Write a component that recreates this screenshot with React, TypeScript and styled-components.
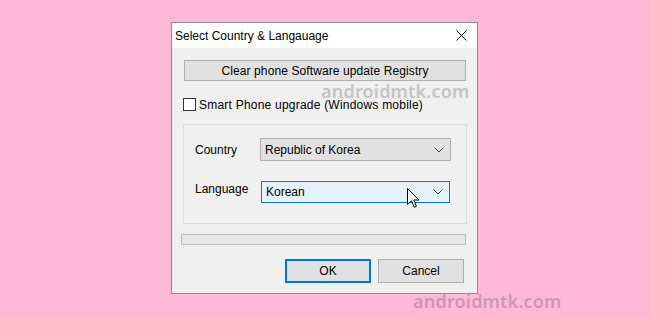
import styled, { createGlobalStyle } from 'styled-components'

const GlobalStyle = createGlobalStyle`
    html, body {
        margin: 0;
        padding: 0;
        background: #ffb9d6;
    }
    body {
        font-family: "Liberation Sans", Arial, sans-serif;
        font-size: 12px;
        color: #000;
    }
`

const Page = styled.div`
    position: relative;
    width: 650px;
    height: 318px;
    padding: 22px 0 0 171px;
    box-sizing: border-box;
    overflow: hidden;
`

const Window = styled.div`
    width: 307px;
    height: 272px;
    box-sizing: border-box;
    border: 1px solid #8c8c8c;
    background: #f0f0f0;
    display: flex;
    flex-direction: column;
`

const TitleBar = styled.div`
    height: 25px;
    background: #fff;
    display: flex;
    align-items: center;
    justify-content: space-between;
    padding: 0 10px 0 3px;
    font-size: 12px;
`

const Body = styled.div`
    display: flex;
    flex-direction: column;
    align-items: flex-start;
`

const WideButton = styled.div`
    margin: 12px 0 0 12px;
    width: 282px;
    height: 21px;
    box-sizing: border-box;
    border: 1px solid #adadad;
    background: #e1e1e1;
    display: flex;
    align-items: center;
    justify-content: center;
    letter-spacing: 0.1px;
`

const CheckRow = styled.label`
    margin: 17px 0 0 11px;
    display: flex;
    align-items: center;
    gap: 3px;
    height: 13px;
    letter-spacing: 0.22px;
`

const CheckBox = styled.span`
    width: 13px;
    height: 13px;
    box-sizing: border-box;
    border: 1px solid #333;
    background: #fff;
`

const Group = styled.div`
    margin: 13px 0 0 11px;
    width: 284px;
    height: 100px;
    box-sizing: border-box;
    border: 1px solid #dcdcdc;
    padding: 13px 0 0 11px;
    display: flex;
    flex-direction: column;
    gap: 20px;
`

const FieldRow = styled.div<{ $raise?: number }>`
    display: flex;
    align-items: center;
    label {
        width: 65px;
        margin-top: ${p => -(p.$raise ?? 0)}px;
    }
`

const Combo = styled.div<{ $focused?: boolean }>`
    width: ${p => (p.$focused ? 189 : 191)}px;
    height: ${p => (p.$focused ? 22 : 23)}px;
    margin-left: ${p => (p.$focused ? 1 : 0)}px;
    box-sizing: border-box;
    border: 1px solid ${p => (p.$focused ? '#0078d7' : '#adadad')};
    background: ${p => (p.$focused ? '#e5f1fb' : '#e1e1e1')};
    display: flex;
    align-items: center;
    justify-content: space-between;
    padding: 0 6px 0 4px;
    font-size: 12px;
`

const Progress = styled.div`
    margin: 10px 0 0 9px;
    width: 285px;
    height: 11px;
    box-sizing: border-box;
    border: 1px solid #bcbcbc;
    background: #e6e6e6;
`

const Buttons = styled.div`
    margin: 14px 0 0 113px;
    display: flex;
    gap: 7px;
`

const DialogButton = styled.div<{ $default?: boolean }>`
    width: 86px;
    height: 24px;
    box-sizing: border-box;
    border: ${p => (p.$default ? '2px solid #0078d7' : '1px solid #adadad')};
    background: #e1e1e1;
    display: flex;
    align-items: center;
    justify-content: center;
`

const Watermark = styled.div<{ $x: number; $y: number; $dark?: boolean }>`
    position: absolute;
    left: ${p => p.$x}px;
    top: ${p => p.$y}px;
    font-family: "Noto Sans", sans-serif;
    font-weight: 600;
    font-size: 18px;
    line-height: 12px;
    letter-spacing: 0.2px;
    color: ${p => (p.$dark ? '#c898b0' : '#c4c4c4')};
    pointer-events: none;
`

const Cursor = styled.svg`
    position: absolute;
    left: 407px;
    top: 188px;
`

const Chevron = () => (
    <svg width="10" height="6" viewBox="0 0 10 6">
        <path d="M0.5 0.5 L5 5 L9.5 0.5" fill="none" stroke="#444" strokeWidth="1" />
    </svg>
)

const CloseIcon = () => (
    <svg width="11" height="11" viewBox="0 0 11 11">
        <path d="M0.5 0.5 L10.5 10.5 M10.5 0.5 L0.5 10.5" stroke="#000" strokeWidth="1" />
    </svg>
)

export default function App() {
    return (
        <>
            <GlobalStyle />
            <Page>
                <Window>
                    <TitleBar>
                        <span>Select Country &amp; Langauage</span>
                        <CloseIcon />
                    </TitleBar>
                    <Body>
                        <WideButton>Clear phone Software update Registry</WideButton>
                        <CheckRow>
                            <CheckBox />
                            <span>Smart Phone upgrade (Windows mobile)</span>
                        </CheckRow>
                        <Group>
                            <FieldRow>
                                <label>Country</label>
                                <Combo>
                                    <span>Republic of Korea</span>
                                    <Chevron />
                                </Combo>
                            </FieldRow>
                            <FieldRow $raise={6}>
                                <label>Language</label>
                                <Combo $focused>
                                    <span>Korean</span>
                                    <Chevron />
                                </Combo>
                            </FieldRow>
                        </Group>
                        <Progress />
                        <Buttons>
                            <DialogButton $default>OK</DialogButton>
                            <DialogButton>Cancel</DialogButton>
                        </Buttons>
                    </Body>
                </Window>
                <Watermark $x={321} $y={85}>androidmtk.com</Watermark>
                <Watermark $x={413} $y={295} $dark>androidmtk.com</Watermark>
                <Cursor width="13" height="21" viewBox="0 0 13 21">
                    <path
                        d="M0.5 0.5 L0.5 16.5 L4.5 12.8 L7.2 19.2 L9.4 18.3 L6.8 12 L12 12 Z"
                        fill="#fff"
                        stroke="#000"
                        strokeWidth="1"
                        strokeLinejoin="miter"
                    />
                </Cursor>
            </Page>
        </>
    )
}
